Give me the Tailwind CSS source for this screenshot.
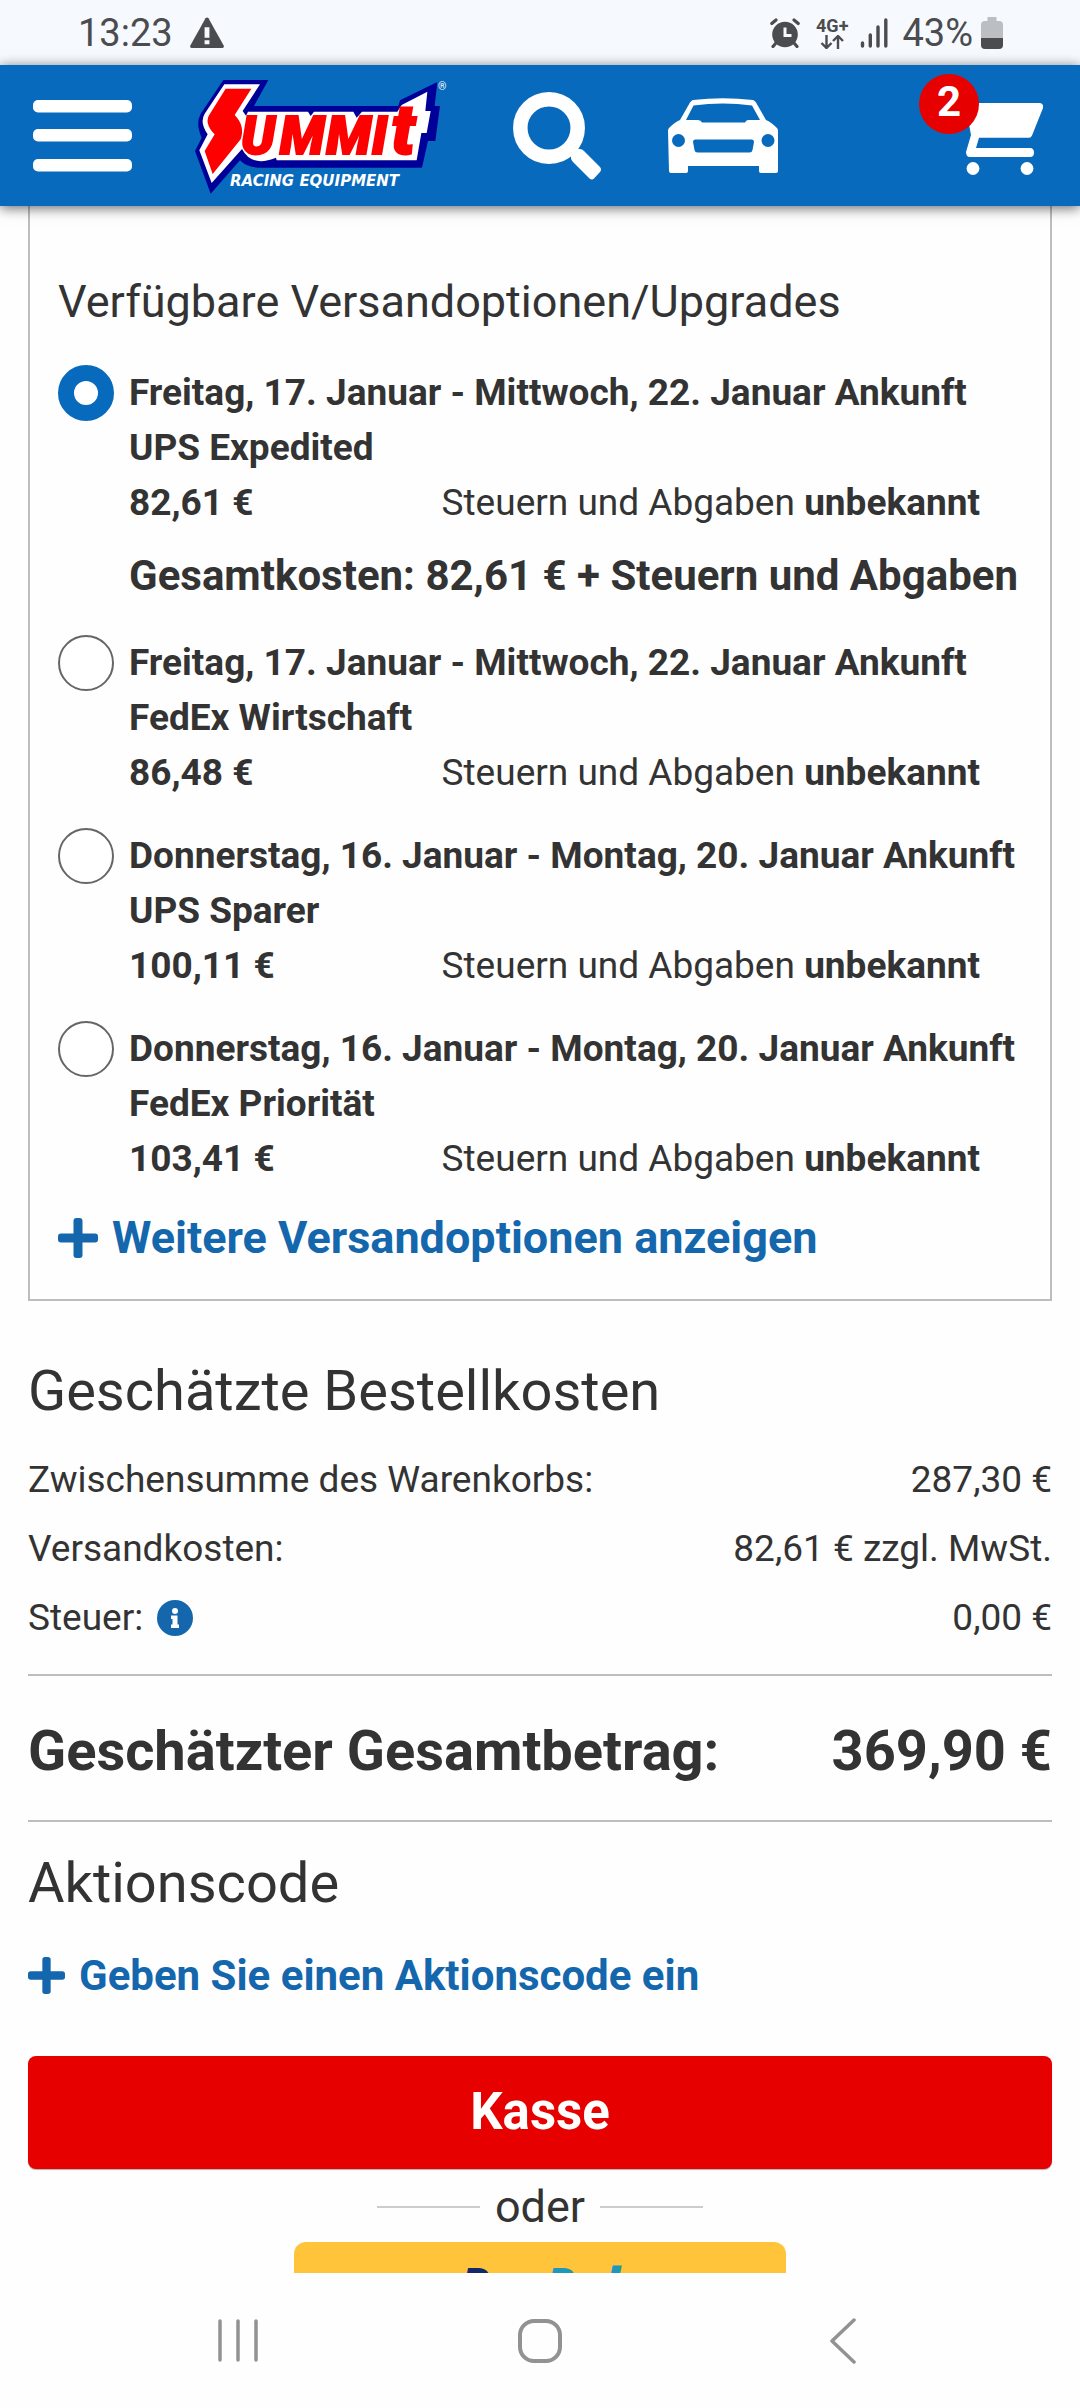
<!DOCTYPE html>
<html lang="de">
  <head>
    <meta charset="UTF-8" />
    <meta name="viewport" content="width=device-width, initial-scale=1.0" />
    <script src="https://cdn.jsdelivr.net/npm/@tailwindcss/browser@4"></script>
    <title>Warenkorb - Summit Racing Equipment</title>
  </head>
  <body
    class="h-screen flex flex-col bg-[#fefefe] text-[#333333] font-['Roboto',sans-serif]"
  >
    <!-- Status bar -->
    <div
      class="h-[65px] shrink-0 flex items-center justify-between pl-[78px] pr-[77px] bg-[#f6f9fe] text-[#4a4c4f] text-[38px] leading-[48px]"
    >
      <div class="flex items-center gap-4">
        <span>13:23</span>
        <svg class="w-9 h-[31px]" viewBox="0 0 36 32" fill="currentColor">
          <path
            d="M16.5 1.2Q18 -.4 19.500 1.200L35.500 30Q35.500 32 34 32H2Q.5 32 .5 30Z"
          />
          <path d="M15.500 10.500h5v11h-5zM15.500 24h5v4h-5z" fill="#f6f9fe" />
        </svg>
      </div>
      <div class="flex items-center">
        <svg class="w-[30px] h-[30px] mr-4" viewBox="0 0 30 30">
          <circle cx="15" cy="16.500" r="12.800" fill="currentColor" />
          <path
            d="M1.800 5.500 6 2M28.200 5.500 24 2M6 25l-3 3.500M24 25l3 3.500"
            stroke="currentColor"
            stroke-width="3.200"
            stroke-linecap="round"
          />
          <path d="M15 9.500v8h6.500" fill="none" stroke="#f6f9fe" stroke-width="3" />
        </svg>
        <div class="flex flex-col items-center mr-3">
          <span class="text-[18px] leading-[18px] font-bold">4G+</span>
          <svg class="w-6 h-[14px]" viewBox="0 0 24 14">
            <path
              d="M6.500 0v12.500M1.500 8l5 5 5-5M18 14V1.500M13 6l5-5 5 5"
              fill="none"
              stroke="currentColor"
              stroke-width="2.400"
            />
          </svg>
        </div>
        <svg class="w-7 h-[30px] mr-3.5" viewBox="0 0 28 30">
          <path
            d="M2.500 25v3M10.300 17v11M18 9v19M25.800 2v26"
            stroke="currentColor"
            stroke-width="3.400"
            stroke-linecap="round"
          />
        </svg>
        <span>43%</span>
        <svg class="w-[22px] h-8 ml-2" viewBox="0 0 22 32">
          <path
            d="M6.500 0h9v4H18q4 0 4 4v13H0V8q0-4 4-4h2.500z"
            fill="#bbbec2"
          />
          <path d="M0 21h22v7q0 4-4 4H4q-4 0-4-4z" fill="currentColor" />
        </svg>
      </div>
    </div>

    <!-- Header -->
    <header
      class="relative z-10 h-[141px] shrink-0 flex items-center bg-[#086abd] pl-[33px] pr-[37px] text-white shadow-[0_2px_12px_rgba(0,0,0,0.6)]"
    >
      <button aria-label="Menü">
        <svg class="w-[99px] h-[72px]" viewBox="0 0 99 72" fill="currentColor">
          <rect y="0" width="99" height="12.500" rx="5" />
          <rect y="29" width="99" height="12.500" rx="5" />
          <rect y="59" width="99" height="12.500" rx="5" />
        </svg>
      </button>
      <a href="#" class="ml-12" aria-label="Summit Racing Equipment">
        <svg class="w-[280px] h-[130px]" viewBox="0 0 840 390">
          <path
            d="M130 27H265L222 105H655L660 88 772 33 764 105H780L766 210H744L726 290H235Q198 288 180 268L92 368 45 240 65 200Q46 158 62 128Z"
            fill="#000099"
          />
          <path
            d="M133 40H240L188 120 198 134 204 122H384L392 135 402 122H520L530 140 546 122H652L665 102 742 62 736 120H752L740 186H724L710 268H290L288 260Q215 290 186 234L95 336 58 238 83 190Q58 155 74 128Z"
            fill="#ffffff"
          />
          <path
            d="M137 53H214L164 132Q196 165 182 205L98 309 74 240 104 190Q70 155 90 128Z"
            fill="#ff0000"
          />
          <g
            fill="#ff0000"
            stroke="#ff0000"
            stroke-width="6"
            font-family="Roboto"
            font-weight="900"
            font-style="italic"
          >
            <text x="183 299 439 575" y="250" font-size="158">UMMI</text>
            <text x="634" y="250" font-size="212">t</text>
          </g>
          <text
            x="150"
            y="345"
            font-family="DejaVu Sans"
            font-weight="700"
            font-style="italic"
            font-size="45"
            fill="#ffffff"
          >
            RACING EQUIPMENT
          </text>
          <text x="774" y="56" font-family="Roboto" font-size="32" fill="#ffffff">®</text>
        </svg>
      </a>
      <button class="ml-[53px]" aria-label="Suche">
        <svg class="size-[88px]" viewBox="0 0 88 88">
          <circle
            cx="36"
            cy="36"
            r="28.700"
            fill="none"
            stroke="currentColor"
            stroke-width="14.500"
          />
          <path
            d="M63 57H67Q69 57 71 59L87 75Q89 77.500 87 80L81 86.500Q79 88.500 76.500 86.500L60 70Q58 68 58 66V60Z"
            fill="currentColor"
          />
        </svg>
      </button>
      <a href="#" class="ml-[67px]" aria-label="Meine Garage">
        <svg class="w-[110px] h-[75px]" viewBox="0 0 110 75">
          <path
            fill="currentColor"
            d="M12 22 22 4.500Q23 2.500 25 2Q55-1.500 85 2Q87 2.500 88 4.500L98 22Q103 24 109 30Q110 31 110 33V73Q110 75 108 75H93Q91 75 91 73V68H20V73Q20 75 18 75H3Q1 75 1 73L0 33Q0 31 1 30Q7 24 12 22Z"
          />
          <path
            fill="#086abd"
            d="M18 22 25.500 7.500Q55 3.500 84 7.500L92 22H80Q78 22 77 24.500H34Q33 22 30 22ZM27 41.500H84Q86 41.500 86 44L84.500 52Q84 54.500 81.500 54.500H29.500Q27 54.500 26.500 52L25 44Q25 41.500 27 41.500Z"
          />
          <circle cx="10.500" cy="42.500" r="6.500" fill="#086abd" />
          <circle cx="100" cy="42.500" r="6.500" fill="#086abd" />
        </svg>
      </a>
      <a href="#" class="relative ml-auto pt-1.5" aria-label="Warenkorb">
        <svg class="w-[78px] h-[72px]" viewBox="0 0 78 72" fill="currentColor">
          <path
            d="M0 0H75Q79 1 78 5L67 32.500Q66 34.700 64 34.700H14L11 45H65Q69 45 69 49.500T65 54H5Q1 54 1 49L6 32Z"
          />
          <circle cx="8" cy="65.500" r="6.400" />
          <circle cx="62" cy="65.500" r="6.400" />
        </svg>
        <span
          class="absolute -left-[46px] -top-[23px] size-[60px] rounded-full bg-[#e60000] text-center text-[42px] leading-[56px] font-bold"
          >2</span
        >
      </a>
    </header>

    <main class="flex-1 min-h-0 overflow-hidden px-7">
      <!-- Shipping options -->
      <form class="border-x-2 border-b-2 border-[#bdbdbd] px-7 pt-[69px] pb-[34px]">
        <h3 class="text-[45px] leading-[54px]">
          Verfügbare Versandoptionen/Upgrades
        </h3>
        <div class="mt-9 flex flex-col gap-7 text-[37px] leading-[55px]">
          <div class="flex gap-[15px]">
            <input
              type="radio"
              name="versand"
              id="versand1"
              checked
              class="appearance-none size-14 shrink-0 rounded-full border-2 border-[#666666] bg-white checked:border-[16px] checked:border-[#086abd]"
            />
            <label for="versand1" class="flex-1 font-bold whitespace-nowrap">
              <span class="block">Freitag, 17. Januar - Mittwoch, 22. Januar Ankunft</span>
              <span class="block">UPS Expedited</span>
              <span class="flex">
                <span class="w-[35%]">82,61 €</span>
                <span><span class="font-normal">Steuern und Abgaben</span> unbekannt</span>
              </span>
              <span class="block mt-3.5 text-[42px] leading-[63px]">Gesamtkosten: 82,61 € + Steuern und Abgaben</span>
            </label>
          </div>
          <div class="flex gap-[15px]">
            <input
              type="radio"
              name="versand"
              id="versand2"
              class="appearance-none size-14 shrink-0 rounded-full border-2 border-[#666666] bg-white checked:border-[16px] checked:border-[#086abd]"
            />
            <label for="versand2" class="flex-1 font-bold whitespace-nowrap">
              <span class="block">Freitag, 17. Januar - Mittwoch, 22. Januar Ankunft</span>
              <span class="block">FedEx Wirtschaft</span>
              <span class="flex">
                <span class="w-[35%]">86,48 €</span>
                <span><span class="font-normal">Steuern und Abgaben</span> unbekannt</span>
              </span>
            </label>
          </div>
          <div class="flex gap-[15px]">
            <input
              type="radio"
              name="versand"
              id="versand3"
              class="appearance-none size-14 shrink-0 rounded-full border-2 border-[#666666] bg-white checked:border-[16px] checked:border-[#086abd]"
            />
            <label for="versand3" class="flex-1 font-bold whitespace-nowrap">
              <span class="block">Donnerstag, 16. Januar - Montag, 20. Januar Ankunft</span>
              <span class="block">UPS Sparer</span>
              <span class="flex">
                <span class="w-[35%]">100,11 €</span>
                <span><span class="font-normal">Steuern und Abgaben</span> unbekannt</span>
              </span>
            </label>
          </div>
          <div class="flex gap-[15px]">
            <input
              type="radio"
              name="versand"
              id="versand4"
              class="appearance-none size-14 shrink-0 rounded-full border-2 border-[#666666] bg-white checked:border-[16px] checked:border-[#086abd]"
            />
            <label for="versand4" class="flex-1 font-bold whitespace-nowrap">
              <span class="block">Donnerstag, 16. Januar - Montag, 20. Januar Ankunft</span>
              <span class="block">FedEx Priorität</span>
              <span class="flex">
                <span class="w-[35%]">103,41 €</span>
                <span><span class="font-normal">Steuern und Abgaben</span> unbekannt</span>
              </span>
            </label>
          </div>
        </div>
        <a
          href="#"
          class="mt-[25px] flex items-center gap-3.5 text-[45px] leading-[54px] font-bold text-[#1467ac]"
        >
          <svg class="size-10" viewBox="0 0 40 40" fill="currentColor">
            <rect x="15.500" width="9" height="40" rx="3" />
            <rect y="15.500" width="40" height="9" rx="3" />
          </svg>
          Weitere Versandoptionen anzeigen
        </a>
      </form>

      <!-- Order summary -->
      <h2 class="mt-14 text-[56px] leading-[68px]">Geschätzte Bestellkosten</h2>
      <dl class="mt-[27px] flex flex-col gap-3.5 text-[37px] leading-[55px]">
        <div class="flex justify-between">
          <dt>Zwischensumme des Warenkorbs:</dt>
          <dd>287,30 €</dd>
        </div>
        <div class="flex justify-between">
          <dt>Versandkosten:</dt>
          <dd>82,61 € zzgl. MwSt.</dd>
        </div>
        <div class="flex justify-between">
          <dt class="flex items-center gap-3.5">
            Steuer:
            <button aria-label="Info zur Steuer" class="text-[#1467ac]">
              <svg class="size-9" viewBox="0 0 36 36">
                <circle cx="18" cy="18" r="18" fill="currentColor" />
                <circle cx="18" cy="11" r="3" fill="#ffffff" />
                <path d="M14 15.500h6.500v9H22V28h-8v-3.500h1.500V19H14z" fill="#ffffff" />
              </svg>
            </button>
          </dt>
          <dd>0,00 €</dd>
        </div>
      </dl>
      <dl
        class="mt-[29px] pt-[41px] pb-[35px] flex justify-between border-y-2 border-[#bdbdbd] text-[56px] leading-[68px] font-bold"
      >
        <dt>Geschätzter Gesamtbetrag:</dt>
        <dd>369,90 €</dd>
      </dl>

      <!-- Promo code -->
      <h2 class="mt-[27px] text-[56px] leading-[68px]">Aktionscode</h2>
      <a
        href="#"
        class="mt-[27px] flex items-center gap-3.5 text-[42px] leading-[63px] font-bold text-[#1467ac]"
      >
        <svg class="size-[37px]" viewBox="0 0 40 40" fill="currentColor">
          <rect x="15.500" width="9" height="40" rx="3" />
          <rect y="15.500" width="40" height="9" rx="3" />
        </svg>
        Geben Sie einen Aktionscode ein
      </a>

      <button
        class="mt-[49px] w-full h-[113px] rounded-lg bg-[#e60000] text-white text-[51px] font-bold shadow-[0_1px_1px_rgba(0,0,0,0.3)]"
      >
        Kasse
      </button>
      <div class="mt-[11px] flex items-center justify-center gap-[15px] text-[45px] leading-[54px]">
        <span class="w-[103px] h-0.5 bg-[#cccccc]"></span>
        oder
        <span class="w-[103px] h-0.5 bg-[#cccccc]"></span>
      </div>
      <button
        class="flex items-start justify-center mx-auto mt-2 w-[48%] pt-[18px] pb-7 rounded-xl bg-[#ffc439] font-['Open_Sans',sans-serif] text-[48px] leading-[48px] font-extrabold italic text-[#11296b]"
      >
        Pay<span class="text-[#1f97b8]">Pal</span>
      </button>
    </main>

    <!-- Android navigation -->
    <nav
      class="h-[135px] shrink-0 flex items-center justify-between bg-[#fefefe] px-[217px] text-[#929292]"
    >
      <button aria-label="Letzte Apps">
        <svg class="w-[42px] h-[43px]" viewBox="0 0 42 43">
          <path
            d="M3 2v39M21 2v39M39 2v39"
            stroke="currentColor"
            stroke-width="3.500"
            stroke-linecap="round"
          />
        </svg>
      </button>
      <button aria-label="Startseite">
        <svg class="size-11" viewBox="0 0 44 44">
          <rect
            x="2"
            y="2"
            width="40"
            height="40"
            rx="14"
            fill="none"
            stroke="currentColor"
            stroke-width="4"
          />
        </svg>
      </button>
      <button aria-label="Zurück">
        <svg class="w-[42px] h-[46px]" viewBox="0 0 42 46">
          <path
            d="M33 2 11 23 33 44"
            fill="none"
            stroke="currentColor"
            stroke-width="3.500"
            stroke-linecap="round"
            stroke-linejoin="round"
          />
        </svg>
      </button>
    </nav>
  </body>
</html>
